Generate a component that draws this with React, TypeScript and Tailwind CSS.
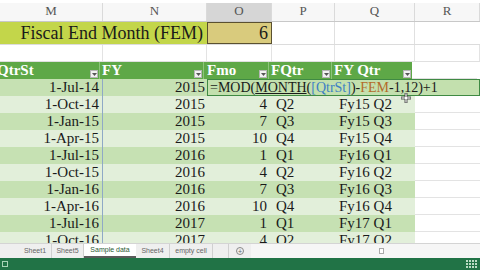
import React from 'react';

const cols = [103, 104, 65, 63, 80, 65];
const letters = ['M', 'N', 'O', 'P', 'Q', 'R'];

type Row = { qtr: string; fy: string; fmo: string; fq: string; fyq: string };

const rows: Row[] = [
  { qtr: '1-Jul-14', fy: '2015', fmo: '', fq: '', fyq: '' },
  { qtr: '1-Oct-14', fy: '2015', fmo: '4', fq: 'Q2', fyq: 'Fy15 Q2' },
  { qtr: '1-Jan-15', fy: '2015', fmo: '7', fq: 'Q3', fyq: 'Fy15 Q3' },
  { qtr: '1-Apr-15', fy: '2015', fmo: '10', fq: 'Q4', fyq: 'Fy15 Q4' },
  { qtr: '1-Jul-15', fy: '2016', fmo: '1', fq: 'Q1', fyq: 'Fy16 Q1' },
  { qtr: '1-Oct-15', fy: '2016', fmo: '4', fq: 'Q2', fyq: 'Fy16 Q2' },
  { qtr: '1-Jan-16', fy: '2016', fmo: '7', fq: 'Q3', fyq: 'Fy16 Q3' },
  { qtr: '1-Apr-16', fy: '2016', fmo: '10', fq: 'Q4', fyq: 'Fy16 Q4' },
  { qtr: '1-Jul-16', fy: '2017', fmo: '1', fq: 'Q1', fyq: 'Fy17 Q1' },
  { qtr: '1-Oct-16', fy: '2017', fmo: '4', fq: 'Q2', fyq: 'Fy17 Q2' },
];

const tabs = [
  { name: 'Sheet1', w: 'w-[33px]' },
  { name: 'Sheet5', w: 'w-[32px]' },
  { name: 'Sample data', w: 'w-[52px]', active: true },
  { name: 'Sheet4', w: 'w-[34px]' },
  { name: 'empty cell', w: 'w-[43px]' },
];

const Drop = () => (
  <div className="absolute right-[1px] bottom-[1px] w-[8px] h-[8px] bg-[#f2f2f2] border border-[#b5b5b5] flex items-center justify-center">
    <svg width="5" height="3" viewBox="0 0 5 3"><path d="M0 0h5L2.5 3z" fill="#555" /></svg>
  </div>
);

const serif = { fontFamily: '"Liberation Serif", "DejaVu Serif", serif' };

const App: React.FC = () => {
  return (
    <div className="w-[480px] h-[270px] overflow-hidden bg-white flex flex-col" style={serif}>
      <div className="h-[243px] overflow-hidden flex flex-col relative">
        {/* column letters */}
        <div className="h-[3px] bg-white shrink-0" />
        <div className="flex h-[19px] shrink-0 border-b border-[#c8c8c8] bg-[#f7f7f7]">
          {letters.map((l, i) => (
            <div
              key={l}
              style={{ width: cols[i] }}
              className={`flex items-end pb-[1px] justify-center text-[13px] text-[#555] border-r border-[#dadada] ${l === 'O' ? 'bg-[#d6d6d6] text-[#3d6a4a]' : ''}`}
            >
              {l}
            </div>
          ))}
        </div>

        {/* row 1: fiscal end month */}
        <div className="flex h-[23px] shrink-0 border-b border-[#dcdcdc]">
          <div className="w-[207px] bg-[#c3d64a] flex items-center justify-end pr-[4px] text-[18px] text-[#1a1a1a]">
            Fiscal End Month (FEM)
          </div>
          <div className="w-[65px] bg-[#d9cb7d] border border-[#5a5030] flex items-center justify-end pr-[3px] text-[18px] text-[#1a1a1a]">
            6
          </div>
          <div className="w-[63px] border-r border-[#e0e0e0]" />
          <div className="w-[80px] border-r border-[#e0e0e0]" />
          <div className="w-[65px]" />
        </div>

        {/* row 2 */}
        <div className="flex h-[17px] shrink-0 border-b border-[#e0e0e0]">
          {cols.map((w, i) => (
            <div key={i} style={{ width: w }} className="border-r border-[#e3e3e3]" />
          ))}
        </div>

        {/* table header */}
        <div className="flex h-[17px] shrink-0 text-white font-bold text-[15px]">
          <div className="w-[103px] bg-[#5ea847] relative flex items-center -ml-[3px] overflow-hidden border-r border-[#8cc47a]">
            <span>QtrSt</span>
            <Drop />
          </div>
          <div className="w-[104px] bg-[#5ea847] relative flex items-center pl-[2px] border-r border-[#8cc47a]">
            FY
            <Drop />
          </div>
          <div className="w-[65px] bg-[#5ea847] relative flex items-center pl-[3px] border-r border-[#8cc47a]">
            Fmo
            <Drop />
          </div>
          <div className="w-[63px] bg-[#5ea847] relative flex items-center pl-[2px] border-r border-[#8cc47a]">
            FQtr
            <Drop />
          </div>
          <div className="w-[80px] bg-[#5ea847] relative flex items-center pl-[2px]">
            FY Qtr
            <Drop />
          </div>
          <div className="w-[65px] bg-white border-b border-[#e0e0e0]" />
        </div>

        {/* data rows */}
        {rows.map((r, idx) => {
          const dark = idx % 2 === 0;
          const bg = dark ? 'bg-[#c6e1b3]' : 'bg-[#e2efda]';
          if (idx === 0) {
            return (
              <div key={idx} className="flex h-[17px] shrink-0 text-[15px] text-[#1a1a1a]">
                <div className={`w-[103px] ${bg} flex items-center justify-end pr-[3px] border-r border-[#8fa9c6]`}>{r.qtr}</div>
                <div className={`w-[104px] ${bg} flex items-center justify-end pr-[2px]`}>{r.fy}</div>
                <div className="flex-1 bg-[#c3e0ae] flex items-center pl-[2px] border border-[#3f8a43] whitespace-nowrap text-[14px]">
                  <span>=MOD(</span>
                  <span className="underline">MONTH</span>
                  <span>(</span>
                  <span className="text-[#3d7fc4]">[QtrSt]</span>
                  <span>)-</span>
                  <span className="text-[#b36b2a]">FEM</span>
                  <span>-1,12)+1</span>
                </div>
              </div>
            );
          }
          return (
            <div key={idx} className="flex h-[17px] shrink-0 text-[15px] text-[#1a1a1a]">
              <div className={`w-[103px] ${bg} flex items-center justify-end pr-[3px] border-r border-[#8fa9c6]`}>{r.qtr}</div>
              <div className={`w-[104px] ${bg} flex items-center justify-end pr-[2px]`}>{r.fy}</div>
              <div className={`w-[65px] ${bg} flex items-center justify-end pr-[5px]`}>{r.fmo}</div>
              <div className={`w-[63px] ${bg} flex items-center pl-[4px]`}>{r.fq}</div>
              <div className={`w-[80px] ${bg} flex items-center pl-[4px]`}>{r.fyq}</div>
              <div className="w-[65px] bg-white border-b border-[#e3e3e3]" />
            </div>
          );
        })}

        {/* mouse cursor */}
        <svg className="absolute left-[401px] top-[93px]" width="10" height="10" viewBox="0 0 10 10">
          <path d="M4 0h2v4h4v2H6v4H4V6H0V4h4z" fill="#fff" stroke="#333" strokeWidth="0.8" />
        </svg>
      </div>

      {/* sheet tabs */}
      <div className="h-[15px] shrink-0 bg-[#efefef] border-t border-[#d4d4d4] flex items-stretch text-[7px] text-[#666] whitespace-nowrap" style={{ fontFamily: '"Liberation Sans", Arial, sans-serif' }}>
        <div className="w-[19px] shrink-0" />
        {tabs.map(t => (
          <div
            key={t.name}
            className={`${t.w} shrink-0 flex items-center justify-center ${t.active ? 'bg-white text-[#2b5a33] border-b-2 border-[#5a5a5a]' : 'border-r border-[#d0d0d0]'}`}
          >
            {t.name}
          </div>
        ))}
        <div className="w-[16px] shrink-0 border-r border-[#d0d0d0]" />
        <div className="w-[22px] shrink-0 flex items-center justify-center">
          <div className="w-[8px] h-[8px] rounded-full border border-[#888] flex items-center justify-center text-[7px] leading-none">+</div>
        </div>
        <div className="flex-1 bg-[#f6f6f6] relative">
          <div className="absolute left-[128px] top-[4px] w-[5px] h-[6px] border border-[#aaa] bg-white" />
        </div>
      </div>

      {/* status bar */}
      <div className="h-[12px] shrink-0 bg-[#217346] flex items-center justify-between px-[2px]">
        <div className="w-[6px] h-[6px] border border-[#a8d4b6]" />
        <svg width="12" height="9" viewBox="0 0 12 9">
          {[0, 3, 6, 9].map(x => [0, 3, 6].map(y => (
            <rect key={`${x}-${y}`} x={x} y={y} width="2" height="2" fill="#b9dcc4" />
          )))}
        </svg>
      </div>
    </div>
  );
};

export default App;
